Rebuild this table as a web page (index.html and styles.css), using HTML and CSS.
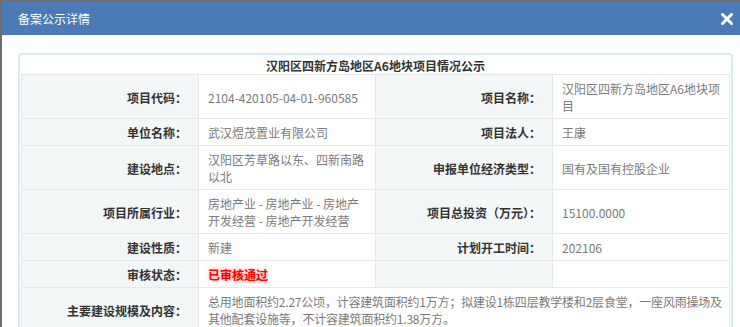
FILE: index.html
```html
<!DOCTYPE html>
<html lang="zh-CN">
<head>
<meta charset="utf-8">
<title>备案公示详情</title>
<link rel="stylesheet" href="styles.css">
</head>
<body>
<div class="modal">
  <div class="modal-header">
    <span class="modal-title">备案公示详情</span>
    <svg class="close" width="12" height="12" viewBox="0 0 12 12"><path d="M1.5 1.5 L10.5 10.5 M10.5 1.5 L1.5 10.5" stroke="#fff" stroke-width="3" stroke-linecap="square"/></svg>
  </div>
  <div class="modal-body">
    <div class="panel">
      <table class="info">
        <colgroup><col><col><col><col></colgroup>
        <tr><td class="caption" colspan="4">汉阳区四新方岛地区A6地块项目情况公示</td></tr>
        <tr>
          <th>项目代码：</th><td>2104-420105-04-01-960585</td>
          <th>项目名称：</th><td>汉阳区四新方岛地区A6地块项目</td>
        </tr>
        <tr>
          <th>单位名称：</th><td>武汉煜茂置业有限公司</td>
          <th>项目法人：</th><td>王康</td>
        </tr>
        <tr>
          <th>建设地点：</th><td>汉阳区芳草路以东、四新南路以北</td>
          <th>申报单位经济类型：</th><td>国有及国有控股企业</td>
        </tr>
        <tr>
          <th>项目所属行业：</th><td>房地产业 - 房地产业 - 房地产开发经营 - 房地产开发经营</td>
          <th>项目总投资（万元）：</th><td>15100.0000</td>
        </tr>
        <tr>
          <th>建设性质：</th><td>新建</td>
          <th>计划开工时间：</th><td>202106</td>
        </tr>
        <tr>
          <th>审核状态：</th><td><span class="status">已审核通过</span></td>
          <th></th><td></td>
        </tr>
        <tr>
          <th>主要建设规模及内容：</th>
          <td colspan="3" class="wide">总用地面积约2.27公顷，计容建筑面积约1万方；拟建设1栋四层教学楼和2层食堂，一座风雨操场及其他配套设施等，不计容建筑面积约1.38万方。</td>
        </tr>
      </table>
    </div>
  </div>
</div>
</body>
</html>
```

FILE: styles.css
```css
html, body {
  margin: 0;
  padding: 0;
}
body {
  background: #6d6d6d;
  font-family: "Noto Sans CJK SC", "Noto Sans", sans-serif;
  font-size: 12px;
  height: 327px;
  overflow: hidden;
}
.modal {
  margin: 1px 0 0 2px;
  background: #fff;
  height: 340px;
}
.modal-header {
  height: 34px;
  background: #4a7bb6;
  display: flex;
  align-items: center;
  justify-content: space-between;
  padding: 0 7px 0 16px;
}
.modal-title {
  color: #fff;
  font-size: 12px;
}
.close {
  display: block;
  margin-top: 2px;
}
.modal-body {
  padding: 18px 7px 0 16px;
}
.panel {
  border: 2px solid #d8e9f8;
  border-radius: 4px;
  padding: 1px;
}
.info {
  width: 100%;
  border-collapse: collapse;
  table-layout: fixed;
}
.info td, .info th {
  border: 1px solid #e6e8e9;
  padding: 5px 8px 4px 9px;
  line-height: 17px;
  vertical-align: middle;
}
.info th {
  background: #f3f7f8;
  text-align: right;
  font-weight: bold;
  color: #333;
  padding-right: 11px;
}
.info td {
  color: #7a7a7a;
  text-align: left;
}
.info td.wide {
  padding-right: 2px;
  letter-spacing: -0.2px;
}
.info td.caption {
  border: none;
  border-bottom: 1px solid #e6e8e9;
  text-align: center;
  font-weight: bold;
  color: #333;
  padding: 1px 0 0;
}
.status {
  color: #ff0000;
  font-weight: bold;
  text-shadow: 0 0 4px rgba(255, 0, 0, 0.45);
}
```
